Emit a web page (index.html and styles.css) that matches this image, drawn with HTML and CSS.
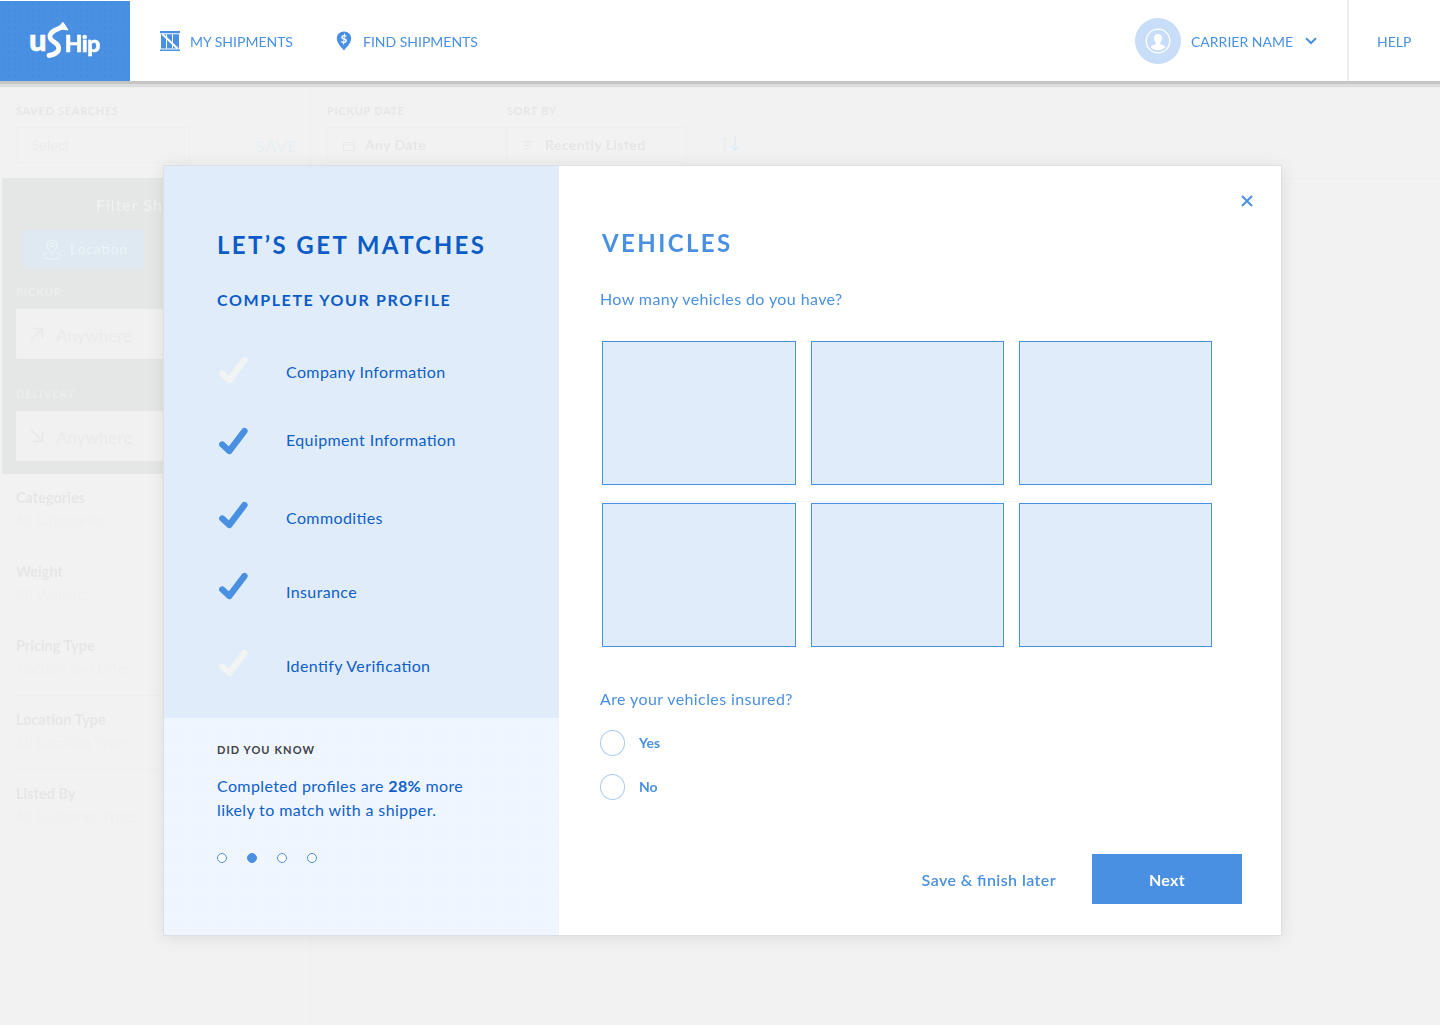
FILE: index.html
```html
<!DOCTYPE html>
<html lang="en">
<head>
<meta charset="utf-8">
<title>uShip - Let's get matches</title>
<link rel="stylesheet" href="styles.css">
</head>
<body>
<header class="topbar">
  <a class="logo">
    <span class="logo-u">u</span>
    <svg class="logo-s" viewBox="0 0 26 38" width="26" height="38"><path d="M4 34.500C11 33.500 15.500 29.500 13 24.500C11 20.800 3.800 20 5 14.500C6 10.500 11 8.500 16 6.500" fill="none" stroke="#fff" stroke-width="4.800" stroke-linecap="round"/><path d="M18 1.300L23 9L12.500 7.500Z" fill="#fff" stroke="#fff" stroke-linejoin="round"/></svg>
    <span class="logo-hip">Hip</span>
  </a>
  <nav class="nav">
    <a class="nav-item nav-first">
      <svg class="nav-icon" viewBox="0 0 20 20" width="20" height="20"><path d="M0 0h20v2.300H0zM0 18.500h20V21H0zM1 3.200h18v14.300H1z" fill="#4a90e2"/><path d="M2.500 3.200L17.500 17.500" stroke="#fff" stroke-width="2.200"/><path d="M6.500 3.200v14.300M12.500 3.200v14.300" stroke="#fff" stroke-width="1"/></svg>
      <span>MY SHIPMENTS</span>
    </a>
    <a class="nav-item nav-second">
      <svg class="nav-icon" viewBox="0 0 16 20" width="16" height="20"><path d="M8 0.500C3.800 0.500 0.800 3.600 0.800 7.500c0 4.800 5 9 7.200 12 2.200-3 7.200-7.200 7.200-12C15.200 3.600 12.200 0.500 8 0.500z" fill="#4a90e2"/><text x="8" y="11.500" text-anchor="middle" class="pin-dollar">$</text></svg>
      <span>FIND SHIPMENTS</span>
    </a>
  </nav>
  <div class="user">
    <span class="avatar">
      <svg viewBox="0 0 26 26" width="26" height="26"><circle cx="13" cy="13" r="11.800" fill="none" stroke="#fff" stroke-width="1.300"/><path d="M13 6c-2.600 0-4 2-4 4.300 0 1.700.8 3.300 1.800 4.200v1.500c-1.700 1-4.200 1.400-5.500 3a11 11 0 0 0 15.400 0c-1.300-1.600-3.800-2-5.500-3v-1.500c1-.9 1.800-2.500 1.800-4.200C17 8 15.600 6 13 6z" fill="#fff"/></svg>
    </span>
    <span class="user-name">CARRIER NAME</span>
    <svg class="chev" viewBox="0 0 12 8" width="12" height="8"><path d="M1 1.200l5 4.800 5-4.800" fill="none" stroke="#4a90e2" stroke-width="2"/></svg>
  </div>
  <a class="help">HELP</a>
</header>

<div class="backdrop">
  <aside class="side">
    <div class="saved">
      <div class="mini-label">SAVED SEARCHES</div>
      <div class="saved-row">
        <div class="saved-select">Select</div>
        <div class="saved-btn">SAVE</div>
      </div>
    </div>
    <div class="filter">
      <div class="filter-title">Filter Shipments</div>
      <div class="tabs"><div class="tab-on">
        <svg class="ghost-icon" viewBox="0 0 20 22" width="20" height="22"><path d="M10 2c-3 0-5 2.200-5 5 0 3.500 3.500 6 5 9 1.500-3 5-5.500 5-9 0-2.800-2-5-5-5zM5 15c-2.500.8-4 2-4 3.300C1 20 5 21 10 21s9-1 9-2.700c0-1.300-1.500-2.500-4-3.300" fill="none" stroke="#f1f5f8" stroke-width="1"/><circle cx="10" cy="7" r="2" fill="none" stroke="#f1f5f8"/></svg>
        Location</div></div>
      <div class="mini-label light">PICKUP</div>
      <div class="filter-input"><svg class="ghost-arrow" viewBox="0 0 14 14" width="14" height="14"><path d="M1 13L12 2M3 1.500h9.500V11" fill="none" stroke="#e8e8e8" stroke-width="1.500"/></svg>Anywhere</div>
      <div class="mini-label light second">DELIVERY</div>
      <div class="filter-input"><svg class="ghost-arrow" viewBox="0 0 14 14" width="14" height="14"><path d="M1 1l11 11M3 12.500h9.500V3" fill="none" stroke="#e8e8e8" stroke-width="1.500"/></svg>Anywhere</div>
    </div>
    <ul class="facets">
      <li><b>Categories</b><span>All Categories</span></li>
      <li><b>Weight</b><span>All Weights</span></li>
      <li><b>Pricing Type</b><span>Auction and Offer</span></li>
      <li><b>Location Type</b><span>All Location Types</span></li>
      <li><b>Listed By</b><span>All Customer Types</span></li>
    </ul>
  </aside>
  <section class="results">
    <div class="toolbar">
      <div class="tool-col">
        <div class="mini-label">PICKUP DATE</div>
        <div class="tool-box"><svg class="tool-icon" viewBox="0 0 12 11" width="12" height="11"><path d="M.5 2.500h11v8H.5zM.5 5h11" fill="none" stroke="#e8e8e8"/></svg>Any Date</div>
      </div>
      <div class="tool-col">
        <div class="mini-label">SORT BY</div>
        <div class="tool-box"><svg class="tool-icon" viewBox="0 0 12 11" width="12" height="11"><path d="M1 2h10M1 5.500h7M1 9h4" fill="none" stroke="#e8e8e8"/></svg>Recently Listed</div>
      </div>
      <svg class="sort-icon" viewBox="0 0 22 20" width="22" height="20"><path d="M5 18V4M1 8l4-4 4 4" fill="none" stroke="#e8ecee" stroke-width="1.500"/><path d="M15 3v14M11 13l4 4 4-4" fill="none" stroke="#dfecf5" stroke-width="1.500"/></svg>
    </div>
  </section>
</div>

<div class="modal">
  <div class="panel">
    <div class="panel-top">
      <h1 class="panel-title">LET’S GET MATCHES</h1>
      <h2 class="panel-sub">COMPLETE YOUR PROFILE</h2>
      <ul class="steps">
        <li class="step step-1"><svg class="check off" viewBox="0 0 30 28" width="30" height="28"><path d="M4.300 17.500L11.300 24L26.500 4" /></svg><span>Company Information</span></li>
        <li class="step step-2"><svg class="check" viewBox="0 0 30 28" width="30" height="28"><path d="M4.300 17.500L11.300 24L26.500 4" /></svg><span>Equipment Information</span></li>
        <li class="step step-3"><svg class="check" viewBox="0 0 30 28" width="30" height="28"><path d="M4.300 17.500L11.300 24L26.500 4" /></svg><span>Commodities</span></li>
        <li class="step step-4"><svg class="check" viewBox="0 0 30 28" width="30" height="28"><path d="M4.300 17.500L11.300 24L26.500 4" /></svg><span>Insurance</span></li>
        <li class="step step-5"><svg class="check off" viewBox="0 0 30 28" width="30" height="28"><path d="M4.300 17.500L11.300 24L26.500 4" /></svg><span>Identify Verification</span></li>
      </ul>
    </div>
    <div class="panel-tip">
      <div class="tip-head">DID YOU KNOW</div>
      <p class="tip-text">Completed profiles are <b>28%</b> more<br>likely to match with a shipper.</p>
      <div class="dots"><i></i><i class="on"></i><i></i><i></i></div>
    </div>
  </div>
  <div class="form">
    <svg class="close" viewBox="0 0 12 12" width="12" height="12"><path d="M1 1l10 10M11 1L1 11" stroke="#4a90e2" stroke-width="2" fill="none"/></svg>
    <h2 class="form-title">VEHICLES</h2>
    <p class="question">How many vehicles do you have?</p>
    <div class="grid">
      <div class="tile"></div><div class="tile"></div><div class="tile"></div>
      <div class="tile"></div><div class="tile"></div><div class="tile"></div>
    </div>
    <p class="question q2">Are your vehicles insured?</p>
    <label class="radio"><span class="radio-dot"></span><span class="radio-text">Yes</span></label>
    <label class="radio"><span class="radio-dot"></span><span class="radio-text">No</span></label>
    <div class="actions">
      <a class="later">Save &amp; finish later</a>
      <button class="next">Next</button>
    </div>
  </div>
</div>
</body>
</html>
```

FILE: styles.css
```css
* { box-sizing: border-box; }
html, body { margin: 0; padding: 0; height: 1025px; overflow: hidden; }
body { background: #f2f2f2; font-family: Lato, "Open Sans", sans-serif; font-feature-settings: "liga" 1; color: #4a90e2; position: relative; }
ul { list-style: none; margin: 0; padding: 0; }
h1, h2, p { margin: 0; }

/* top bar */
.topbar { height: 81px; background: #fff; display: flex; align-items: stretch; box-shadow: 0 3px 0 #c5c5c5, 0 6px 1px #dcdcdc; position: relative; z-index: 2; }
.logo { width: 130px; margin-top: 1px; background-color: #4a90e2; background-image: radial-gradient(rgba(30,100,190,.22) .6px, transparent .8px); background-size: 6px 6px; display: flex; align-items: center; justify-content: center; color: #fff; font-weight: 900; line-height: 1; padding-right: 1px; }
.logo-u { font-size: 31px; margin-top: -3px; -webkit-text-stroke: .6px #fff; }
.logo-s { margin: -2px -6px 0 -2px; flex: none; }
.logo-hip { font-size: 23px; letter-spacing: -.5px; margin-top: 4px; -webkit-text-stroke: .5px #fff; }
.nav { display: flex; align-items: center; flex: 1; font-size: 14px; padding-top: 2px; }
.nav-item { display: flex; align-items: center; }
.nav-first { margin-left: 30px; gap: 10px; }
.nav-second { margin-left: 43px; gap: 11px; }
.nav-icon { margin-top: -2px; }
.pin-dollar { font: 900 11px Lato, sans-serif; fill: #fff; }
.user { display: flex; align-items: center; font-size: 14px; padding-right: 30px; border-right: 2px solid #f0f0f0; }
.user-name { padding-top: 1px; }
.avatar { width: 46px; height: 46px; border-radius: 50%; background: #c8ddf7; display: flex; align-items: center; justify-content: center; margin-right: 10px; }
.chev { margin-left: 12px; }
.help { width: 91px; padding: 2px 0 0 28px; font-size: 14px; display: flex; align-items: center; }

/* dimmed page behind the dialog */
.backdrop { display: flex; height: 944px; filter: blur(.6px); }
.side { width: 311px; padding-left: 2px; border-right: 1px solid #eeeeee; flex: none; }
.mini-label { font-size: 11px; font-weight: 700; letter-spacing: .7px; line-height: 14px; color: #e6e6e6; }
.saved { height: 97px; padding: 23px 0 0 14px; }
.saved-row { display: flex; margin-top: 9px; height: 36px; }
.saved-select { width: 174px; border: 1px solid #efefef; padding: 8px 15px; font-size: 14px; color: #ebebeb; }
.saved-btn { margin-left: 66px; padding-top: 9px; font-size: 16px; font-weight: 700; letter-spacing: .6px; color: #e8eff2; }
.filter { height: 296px; background: #e5e6e6; padding: 17px 14px 0; }
.filter-title { padding-left: 80px; font-size: 16px; letter-spacing: 1px; line-height: 20px; color: #f1f1f1; white-space: nowrap; }
.tabs { margin: 15px 0 0 7px; display: flex; }
.tab-on { width: 121px; height: 38px; background: #dee9f1; color: #eef3f6; padding: 10px 0 0 47px; font-size: 14px; letter-spacing: .8px; line-height: 18px; position: relative; }
.ghost-icon { position: absolute; left: 19px; top: 8px; }
.mini-label.light { color: #ededed; margin-top: 17px; letter-spacing: 1px; }
.mini-label.second { margin-top: 28px; }
.filter-input { height: 50px; margin-top: 10px; background: #f1f1f1; border-radius: 2px; padding: 16px 0 0 40px; font-size: 17px; color: #ebebeb; position: relative; }
.ghost-arrow { position: absolute; left: 14px; top: 18px; }
.facets { padding: 0 0 0 14px; }
.facets li { height: 74px; padding-top: 15px; border-bottom: 1px solid #eeeeee; display: flex; flex-direction: column; }
.facets b { font-size: 14.500px; line-height: 18px; color: #e6e6e6; }
.facets span { margin-top: 5px; font-size: 14.500px; line-height: 18px; color: #efefef; }
.facets li:nth-child(-n+2), .facets li:last-child { border-bottom-color: #f2f2f2; }
.results { flex: 1; }
.toolbar { height: 98px; border-bottom: 1px solid #eeeeee; display: flex; padding: 23px 0 0 16px; position: relative; }
.tool-col { width: 180px; }
.tool-box { height: 36px; margin-top: 9px; border: 1px solid #efefef; padding: 8px 0 0 37px; font-size: 14px; font-weight: 700; letter-spacing: .4px; color: #e6e6e6; position: relative; }
.tool-icon { position: absolute; left: 15px; top: 12px; }
.sort-icon { position: absolute; left: 409px; top: 52px; }

/* dialog */
.modal { position: absolute; left: 163px; top: 165px; width: 1119px; height: 771px; display: flex; background: #fff; border: 1px solid #dcdfe3; box-shadow: 0 2px 16px rgba(0,0,0,.09); z-index: 3; }
.panel { width: 395px; flex: none; display: flex; flex-direction: column; color: #0e5fc8; }
.panel-top { height: 552px; background: #e0ecfa; padding: 62px 0 0 53px; }
.panel-title { font-size: 24px; font-weight: 700; letter-spacing: 2.4px; line-height: 34px; color: #0b5cc6; }
.panel-sub { margin-top: 28px; font-size: 16px; font-weight: 700; letter-spacing: 1.6px; line-height: 20px; color: #0b5cc6; }
.step { display: flex; align-items: flex-start; height: 74px; font-size: 16px; letter-spacing: .38px; line-height: 20px; }
.step span { margin-left: 38px; margin-top: 17px; }
.check { flex: none; margin-left: 1px; }
.check path { fill: none; stroke: #4a90e2; stroke-width: 6.300; stroke-linecap: round; stroke-linejoin: round; }
.check.off path { stroke: #f2f3f3; }
.steps { margin-top: 35px; }
.step-1 { height: 68px; }
.step-1 .check { margin-top: 11px; }
.step-2 { height: 78px; }
.step-2 .check { margin-top: 14px; }
.step-3 .check { margin-top: 10px; }
.step-4 .check { margin-top: 7px; }
.step-5 .check { margin-top: 10px; }
.panel-tip { flex: 1; background-color: #f0f6fe; background-image: radial-gradient(rgba(160,195,240,.08) .6px, transparent .8px); background-size: 3px 3px; padding: 26px 0 0 53px; }
.tip-head { font-size: 11px; font-weight: 700; letter-spacing: 1.1px; line-height: 12px; color: #3e4246; }
.tip-text { margin-top: 18px; font-size: 16px; letter-spacing: .38px; line-height: 24px; color: #0f60c9; }
.tip-text b { font-weight: 700; }
.dots { display: flex; gap: 20px; margin-top: 31px; }
.dots i { width: 10px; height: 10px; border-radius: 50%; border: 1px solid #4a90e2; background: #fff; }
.dots i.on { background: #4a90e2; }

.form { flex: 1; position: relative; padding: 60px 0 0 41px; }
.close { position: absolute; top: 29px; right: 28px; }
.form-title { margin-left: 2px; font-size: 24px; font-weight: 700; letter-spacing: 2.4px; line-height: 34px; }
.question { margin-top: 28px; font-size: 16px; letter-spacing: .4px; line-height: 22px; }
.grid { display: grid; grid-template-columns: 194px 193px 193px; grid-auto-rows: 144px; column-gap: 15px; row-gap: 18px; margin: 31px 0 0 2px; width: 610px; position: relative; }
.grid::after { content: ""; position: absolute; left: -2px; top: 160px; width: 420px; height: 1px; background: #eef4fc; }
.tile { background: #e0ecfa; border: 1px solid #4a90e2; position: relative; z-index: 1; }
.q2 { margin-top: 41px; }
.radio { display: flex; align-items: center; height: 26px; margin-top: 18px; font-size: 14px; font-weight: 700; }
.radio-text { margin-top: -2px; }
.q2 + .radio { margin-top: 20px; }
.radio-dot { width: 25px; height: 26px; border-radius: 50%; border: 1px solid #a9ccf4; margin-right: 14px; }
.actions { display: flex; align-items: center; justify-content: flex-end; margin: 54px 39px 0 0; gap: 36px; }
.later { font-size: 16px; font-weight: 600; letter-spacing: .42px; }
.next { width: 150px; height: 50px; border: 0; background: #4a90e2; color: #fff; font: 700 16px Lato, sans-serif; letter-spacing: .3px; }
```
